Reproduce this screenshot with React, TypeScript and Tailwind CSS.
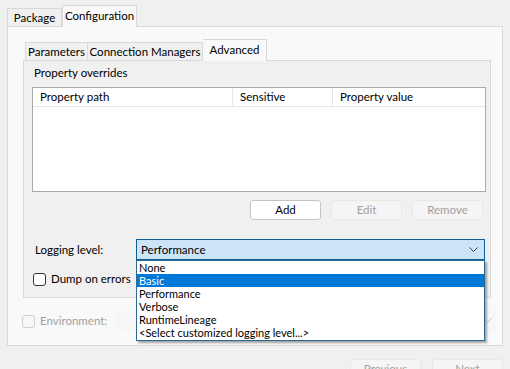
const font = { fontFamily: 'Lato, "Noto Sans", sans-serif' };

function Check({ label, disabled = false }: { label: string; disabled?: boolean }) {
  return (
    <div className="flex items-center gap-[5px]">
      <div
        className={
          disabled
            ? "w-[13px] h-[13px] rounded-[3px] border border-[#cfcfcf] bg-[#f7f7f7]"
            : "w-[13px] h-[13px] rounded-[3px] border border-[#333333] bg-white"
        }
      />
      <span className={disabled ? "text-[#a0a0a0]" : "text-black"}>{label}</span>
    </div>
  );
}

function Btn({ label, disabled = false }: { label: string; disabled?: boolean }) {
  return (
    <div
      className={
        disabled
          ? "w-[71px] h-[20px] flex items-center justify-center rounded-[3px] border border-[#e8e8e8] bg-[#f5f5f5] text-[#a0a0a0]"
          : "w-[71px] h-[20px] flex items-center justify-center rounded-[3px] border border-[#c4c4c4] bg-white text-black"
      }
    >
      {label}
    </div>
  );
}

const levels = ["None", "Basic", "Performance", "Verbose", "RuntimeLineage", "<Select customized logging level...>"];

export default function App() {
  return (
    <div className="w-[510px] h-[369px] overflow-hidden bg-[#f0f0f0] text-[11.5px] leading-[14px] text-black" style={font}>
      <div className="pt-[5px] pl-[7px] pr-[7px]">
        {/* outer tabs */}
        <div className="flex items-end h-[21px] relative z-10">
          <div className="w-[55px] h-[18px] border border-b-0 border-[#d9d9d9] bg-[#f0f0f0] flex items-center justify-center whitespace-nowrap">
            Package
          </div>
          <div className="w-[75px] h-[22px] -mb-px border border-b-0 border-[#d9d9d9] bg-[#f9f9f9] flex items-center justify-center pb-[2px] whitespace-nowrap">
            Configuration
          </div>
        </div>
        {/* outer panel */}
        <div className="h-[320px] border border-[#d9d9d9] bg-[#f9f9f9] pl-[15px] pr-[11px] pt-[12px]">
          {/* inner tabs */}
          <div className="flex items-end h-[21px] pl-[2px] relative z-10">
            <div className="w-[63px] h-[18px] border border-b-0 border-[#d9d9d9] bg-[#f0f0f0] flex items-center justify-center whitespace-nowrap">
              Parameters
            </div>
            <div className="w-[115px] h-[18px] border border-b-0 border-l-0 border-[#d9d9d9] bg-[#f0f0f0] flex items-center justify-center whitespace-nowrap">
              Connection Managers
            </div>
            <div className="w-[64px] h-[22px] -mb-px border border-b-0 border-l-0 border-[#d9d9d9] bg-[#f9f9f9] flex items-center justify-center pb-[2px] whitespace-nowrap">
              Advanced
            </div>
          </div>
          {/* inner panel */}
          <div className="h-[238px] border border-[#d9d9d9] bg-[#f0f0f0] flex flex-col">
            <div className="pl-[10px] pt-[5px] h-[26px]">Property overrides</div>
            <div className="ml-[8px] mr-[4px] h-[105px] border border-[#a9a9a9] bg-white">
              <div className="flex h-[19px] border-b border-[#e5e5e5]">
                <div className="w-[200px] pl-[7px] flex items-center border-r border-[#e5e5e5]">Property path</div>
                <div className="w-[100px] pl-[7px] flex items-center border-r border-[#e5e5e5]">Sensitive</div>
                <div className="flex-1 pl-[7px] flex items-center">Property value</div>
              </div>
            </div>
            <div className="flex justify-end gap-[10px] mt-[8px] pr-[7px]">
              <Btn label="Add" />
              <Btn label="Edit" disabled />
              <Btn label="Remove" disabled />
            </div>
            <div className="flex items-center mt-[19px] pl-[11px] h-[21px]">
              <div className="w-[101px]">Logging level:</div>
              <div className="relative w-[349px]">
                <div className="h-[21px] border border-[#0d5d97] bg-[#cce4f7] flex items-center justify-between pl-[4px] pr-[6px]">
                  <span>Performance</span>
                  <svg width="9" height="6" viewBox="0 0 9 6">
                    <path d="M0.5 0.5 L4.5 4.5 L8.5 0.5" fill="none" stroke="#404040" strokeWidth="1" />
                  </svg>
                </div>
                <div className="absolute left-0 top-full w-full border border-[#2d6b94] bg-white shadow-[2px_2px_2px_rgba(0,0,0,0.35)] pb-[1px] text-[11px]">
                  {levels.map((l) => (
                    <div
                      key={l}
                      className={l === "Basic" ? "h-[13px] leading-[13px] pl-[2px] bg-[#0078d7] text-white" : "h-[13px] leading-[13px] pl-[2px]"}
                    >
                      {l}
                    </div>
                  ))}
                </div>
              </div>
            </div>
            <div className="mt-[12px] pl-[9px]">
              <Check label="Dump on errors" />
            </div>
          </div>
          {/* environment */}
          <div className="flex items-center mt-[13px] -ml-[1px] h-[20px]">
            <div className="w-[93px]">
              <Check label="Environment:" disabled />
            </div>
            <div className="flex-1 -mr-[5px] h-[20px] bg-[#f7f7f7] flex items-center justify-end pr-[4px]">
              <svg width="9" height="6" viewBox="0 0 9 6">
                <path d="M0.5 0.5 L4.5 4.5 L8.5 0.5" fill="none" stroke="#c0c0c0" strokeWidth="1" />
              </svg>
            </div>
          </div>
        </div>
        {/* bottom buttons */}
        <div className="flex justify-end gap-[11px] mt-[13px]">
          <Btn label="Previous" disabled />
          <Btn label="Next" disabled />
        </div>
      </div>
    </div>
  );
}
